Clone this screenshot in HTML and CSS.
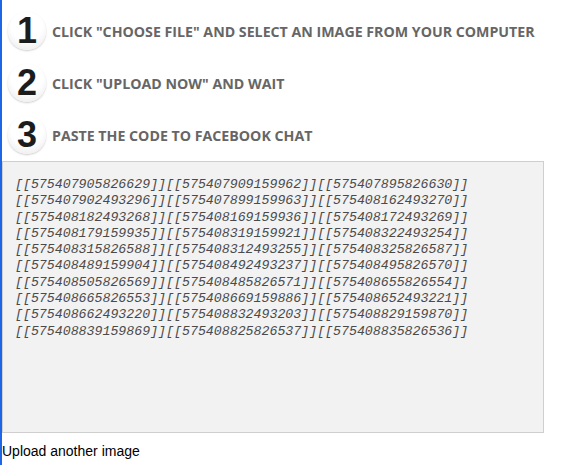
FILE: index.html
```html
<!DOCTYPE html>
<html lang="en">
<head>
  <meta charset="UTF-8">
  <title>Facebook Chat Image Code</title>
  <link rel="stylesheet" href="styles.css">
</head>
<body>
  <div class="steps">
    <div class="step">
      <span class="num">1</span>
      <span class="label">Click "Choose File" and select an image from your computer</span>
    </div>
    <div class="step">
      <span class="num">2</span>
      <span class="label">Click "Upload Now" and wait</span>
    </div>
    <div class="step">
      <span class="num">3</span>
      <span class="label">Paste the code to Facebook chat</span>
    </div>
  </div>

  <textarea class="codes" readonly>[[575407905826629]][[575407909159962]][[575407895826630]]
[[575407902493296]][[575407899159963]][[575408162493270]]
[[575408182493268]][[575408169159936]][[575408172493269]]
[[575408179159935]][[575408319159921]][[575408322493254]]
[[575408315826588]][[575408312493255]][[575408325826587]]
[[575408489159904]][[575408492493237]][[575408495826570]]
[[575408505826569]][[575408485826571]][[575408655826554]]
[[575408665826553]][[575408669159886]][[575408652493221]]
[[575408662493220]][[575408832493203]][[575408829159870]]
[[575408839159869]][[575408825826537]][[575408835826536]]</textarea>

  <div class="again">Upload another image</div>
</body>
</html>
```

FILE: styles.css
```css
body {
  margin: 0;
  border-left: 2px solid #1e66e8;
  min-height: 465px;
  box-sizing: border-box;
  background: #fff;
  font-family: Arial, "Liberation Sans", sans-serif;
}

.steps {
  padding-top: 5px;
}

.step {
  display: flex;
  align-items: center;
  height: 52px;
}

.num {
  width: 38px;
  height: 38px;
  margin-left: 6px;
  margin-right: 6px;
  border-radius: 50%;
  background: radial-gradient(circle at 50% 35%, #fff 50%, #e6e6e6 100%);
  box-shadow: 0 1px 2px rgba(0, 0, 0, 0.2);
  display: flex;
  justify-content: center;
  align-items: center;
  font-family: "Liberation Sans", Arial, sans-serif;
  font-weight: bold;
  font-size: 36px;
  color: #1c1c1c;
  line-height: 1;
}

.label {
  font-family: "Open Sans", sans-serif;
  font-weight: bold;
  font-size: 14.2px;
  color: #666;
  text-transform: uppercase;
}

.codes {
  display: block;
  width: 542px;
  height: 272px;
  margin: 0;
  padding: 15px 12px 11px;
  box-sizing: border-box;
  border: 1px solid #cfcfcf;
  background: #f2f2f2;
  font-family: "Liberation Mono", monospace;
  font-style: italic;
  font-size: 13.25px;
  line-height: 16.3px;
  color: #4a4a4a;
  resize: none;
  overflow: hidden;
}

.again {
  padding-top: 10px;
  font-size: 14px;
  color: #000;
}
```
